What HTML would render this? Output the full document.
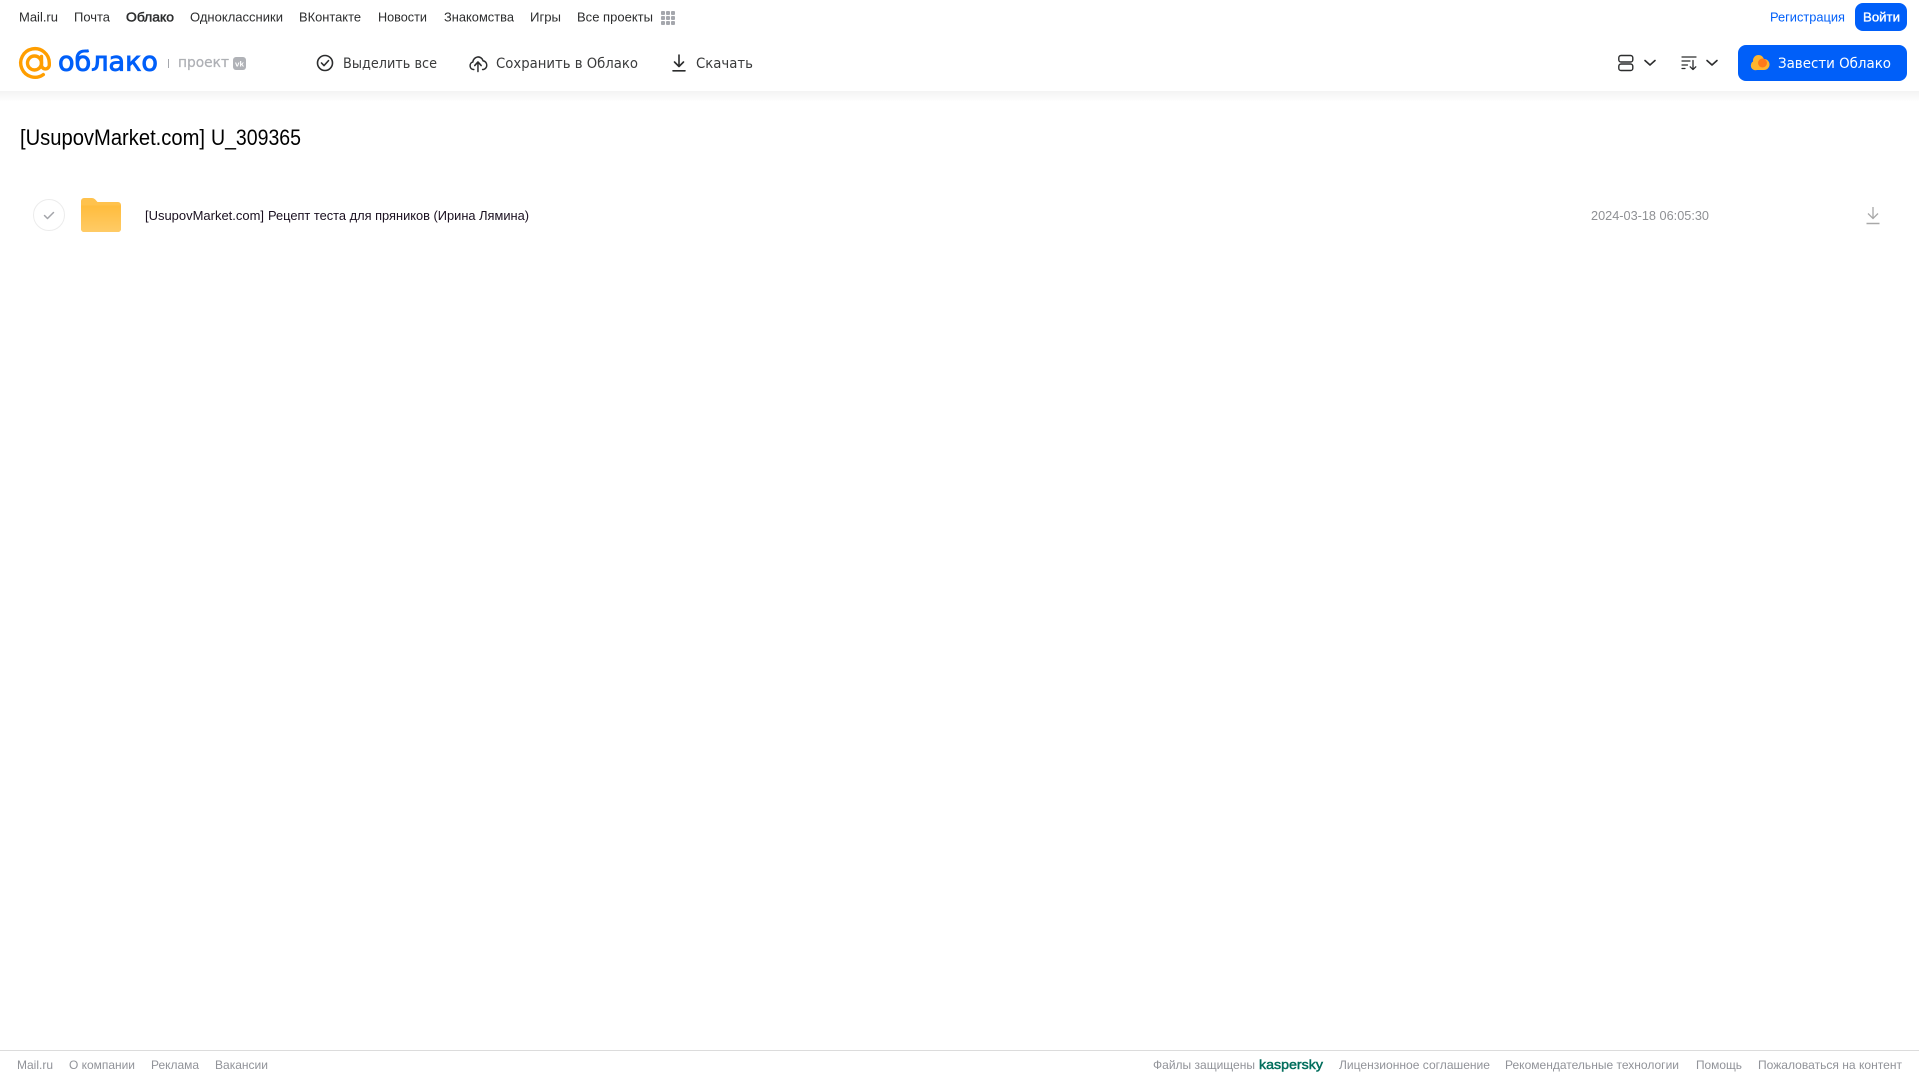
<!DOCTYPE html>
<html lang="ru">
<head>
<meta charset="utf-8">
<title>Облако</title>
<style>
html,body{margin:0;padding:0;background:#fff;width:1919px;height:1079px;overflow:hidden}
svg{display:block;position:absolute;left:0;top:0}
text{font-family:"Liberation Sans",sans-serif;white-space:pre}
.n{font-size:13px;fill:#2c2d2e}
.t{font-family:"DejaVu Sans",sans-serif;font-size:14px;fill:#3a3b3c}
.f{font-size:12px;fill:#919399}
</style>
</head>
<body>
<svg width="1919" height="1079" viewBox="0 0 1919 1079" xmlns="http://www.w3.org/2000/svg">
<defs>
<linearGradient id="sh" x1="0" y1="0" x2="0" y2="1"><stop offset="0" stop-color="#f3f3f3"/><stop offset="1" stop-color="#fff"/></linearGradient>
<linearGradient id="fo" x1="0" y1="0" x2="0" y2="1"><stop offset="0" stop-color="#ffbc3d"/><stop offset="1" stop-color="#ffcb66"/></linearGradient>
</defs>
<rect x="0" y="91" width="1919" height="11" fill="url(#sh)"/>

<!-- top nav -->
<text class="n" x="19" y="21.5" textLength="39" lengthAdjust="spacingAndGlyphs">Mail.ru</text>
<text class="n" x="74" y="21.5" textLength="36" lengthAdjust="spacingAndGlyphs">Почта</text>
<text class="n" x="126" y="21.5" textLength="48" lengthAdjust="spacingAndGlyphs" stroke="#2c2d2e" stroke-width=".45">Облако</text>
<text class="n" x="190" y="21.5" textLength="93" lengthAdjust="spacingAndGlyphs">Одноклассники</text>
<text class="n" x="299" y="21.5" textLength="62" lengthAdjust="spacingAndGlyphs">ВКонтакте</text>
<text class="n" x="378" y="21.5" textLength="49" lengthAdjust="spacingAndGlyphs">Новости</text>
<text class="n" x="444" y="21.5" textLength="70" lengthAdjust="spacingAndGlyphs">Знакомства</text>
<text class="n" x="530" y="21.5" textLength="31" lengthAdjust="spacingAndGlyphs">Игры</text>
<text class="n" x="577" y="21.5" textLength="76" lengthAdjust="spacingAndGlyphs">Все проекты</text>
<g fill="#a5a7ad">
<rect x="661" y="11" width="4" height="4" rx="1"/><rect x="666" y="11" width="4" height="4" rx="1"/><rect x="671" y="11" width="4" height="4" rx="1"/>
<rect x="661" y="16" width="4" height="4" rx="1"/><rect x="666" y="16" width="4" height="4" rx="1"/><rect x="671" y="16" width="4" height="4" rx="1"/>
<rect x="661" y="21" width="4" height="4" rx="1"/><rect x="666" y="21" width="4" height="4" rx="1"/><rect x="671" y="21" width="4" height="4" rx="1"/>
</g>
<text class="n" x="1770" y="21.5" textLength="75" lengthAdjust="spacingAndGlyphs" style="fill:#005ff9">Регистрация</text>
<rect x="1855" y="3" width="52" height="28" rx="8" fill="#005ff9"/>
<text class="n" x="1863" y="21.5" textLength="37" lengthAdjust="spacingAndGlyphs" stroke="#fff" stroke-width=".35" style="fill:#fff">Войти</text>

<!-- logo -->
<path d="M41.500 56.500v8.500a3.900 3.900 0 0 0 7.800 0v-2a14.300 14.300 0 1 0-6 11.600" fill="none" stroke="#ff9e00" stroke-width="3.400" stroke-linecap="round"/>
<circle cx="34.500" cy="63" r="7" fill="none" stroke="#ff9e00" stroke-width="3.400"/>
<text x="58" y="70.500" font-size="27" textLength="100" lengthAdjust="spacingAndGlyphs" fill="#005ff9" stroke="#005ff9" stroke-width=".9" style="font-family:'DejaVu Sans',sans-serif">облако</text>
<rect x="168" y="59" width="1" height="9" fill="#a5a7ad"/>
<text x="178" y="67" font-size="14" textLength="51" lengthAdjust="spacingAndGlyphs" fill="#aeb0b5" stroke="#aeb0b5" stroke-width=".25" style="font-family:'DejaVu Sans',sans-serif">проект</text>
<rect x="233" y="57" width="13" height="13" rx="3" fill="#b0b2b7"/>
<text x="235" y="66.500" font-size="7.500" font-weight="700" textLength="9" lengthAdjust="spacingAndGlyphs" fill="#fff">vk</text>

<!-- toolbar -->
<circle cx="325" cy="63" r="7.500" fill="none" stroke="#2c2d2e" stroke-width="1.600"/>
<path d="M321.500 63l2.500 2.600 4.500-5" fill="none" stroke="#2c2d2e" stroke-width="1.600" stroke-linecap="round" stroke-linejoin="round"/>
<text class="t" x="343" y="68" textLength="94" lengthAdjust="spacingAndGlyphs">Выделить все</text>
<g transform="translate(38.200 0) scale(.92 1)">
<path d="M473.500 69.500h-.5a3.800 3.800 0 0 1-.6-7.500 5.800 5.800 0 0 1 11.200-1.200 4.400 4.400 0 0 1 .4 8.700h-1" fill="none" stroke="#2c2d2e" stroke-width="1.600" stroke-linecap="round" stroke-linejoin="round"/>
<path d="M478 71.500v-9M474.500 65.500l3.500-3.500 3.500 3.500" fill="none" stroke="#2c2d2e" stroke-width="1.600" stroke-linecap="round" stroke-linejoin="round"/>
</g>
<text class="t" x="496" y="68" textLength="142" lengthAdjust="spacingAndGlyphs">Сохранить в Облако</text>
<path d="M679 55v11.500M674.500 62l4.500 4.500 4.500-4.500M673 70.800h12" fill="none" stroke="#2c2d2e" stroke-width="1.600" stroke-linecap="round" stroke-linejoin="round"/>
<text class="t" x="696" y="68" textLength="57" lengthAdjust="spacingAndGlyphs">Скачать</text>

<!-- view / sort -->
<rect x="1618.800" y="55.500" width="14" height="6.500" rx="2.300" fill="none" stroke="#2c2d2e" stroke-width="1.400"/>
<rect x="1618.800" y="64" width="14" height="6.500" rx="2.300" fill="none" stroke="#2c2d2e" stroke-width="1.400"/>
<path d="M1645 60.500l5 4.500 5-4.500" fill="none" stroke="#2c2d2e" stroke-width="1.600" stroke-linecap="round" stroke-linejoin="round"/>
<path d="M1682 57h14M1682 61h8M1682 65h5.500M1682 68.500h3" fill="none" stroke="#2c2d2e" stroke-width="1.200" stroke-linecap="round"/>
<path d="M1693 60.500v9M1690.200 66.800l2.800 2.800 2.800-2.800" fill="none" stroke="#2c2d2e" stroke-width="1.300" stroke-linecap="round" stroke-linejoin="round"/>
<path d="M1707 60.500l5 4.500 5-4.500" fill="none" stroke="#2c2d2e" stroke-width="1.600" stroke-linecap="round" stroke-linejoin="round"/>

<!-- CTA -->
<rect x="1738" y="45" width="169" height="36" rx="8" fill="#005ff9"/>
<g fill="#ffb52e">
<circle cx="1758.500" cy="60.500" r="5.500"/>
<circle cx="1755.500" cy="65.500" r="4.700"/>
<circle cx="1764" cy="64.500" r="5.500"/>
<rect x="1756" y="62" width="8" height="8"/>
</g>
<circle cx="1762.500" cy="63" r="4.500" fill="#ff7a1a"/>
<text x="1778" y="68" font-size="14" textLength="113" lengthAdjust="spacingAndGlyphs" fill="#fff" style="font-family:'DejaVu Sans',sans-serif">Завести Облако</text>

<!-- title -->
<text x="20" y="145" font-size="22" textLength="185" lengthAdjust="spacingAndGlyphs" fill="#000">[UsupovMarket.com]</text>
<text x="211" y="145" font-size="22" textLength="90" lengthAdjust="spacingAndGlyphs" fill="#000">U_309365</text>

<!-- row -->
<circle cx="49" cy="215" r="15.500" fill="#fff" stroke="#ececec" stroke-width="1"/>
<path d="M44.500 215.500l3 3 6-6" fill="none" stroke="#a3a5aa" stroke-width="1.500" stroke-linecap="round" stroke-linejoin="round"/>
<path d="M81 201a3 3 0 0 1 3-3h8a4 4 0 0 1 3 1.300l2.500 2.700h20.500a3 3 0 0 1 3 3v24a3 3 0 0 1-3 3H84a3 3 0 0 1-3-3z" fill="#ffc24d"/>
<path d="M81 205.500h40V229a3 3 0 0 1-3 3H84a3 3 0 0 1-3-3z" fill="url(#fo)"/>
<text x="145" y="220" font-size="13" textLength="119" lengthAdjust="spacingAndGlyphs" fill="#1a1020">[UsupovMarket.com]</text>
<text x="268" y="220" font-size="13" textLength="261" lengthAdjust="spacingAndGlyphs" fill="#1a1020">Рецепт теста для пряников (Ирина Лямина)</text>
<text x="1591" y="220" font-size="13" textLength="118" lengthAdjust="spacingAndGlyphs" fill="#8e9094">2024-03-18 06:05:30</text>
<path d="M1873 207v11.500M1868 213.500l5 5 5-5" fill="none" stroke="#a8a8a8" stroke-width="1.300"/>
<path d="M1866.500 223.500h13" fill="none" stroke="#a8a8a8" stroke-width="1.500"/>

<!-- footer -->
<rect x="0" y="1050" width="1919" height="1" fill="#dcdcdc"/>
<text class="f" x="17" y="1069" textLength="36" lengthAdjust="spacingAndGlyphs">Mail.ru</text>
<text class="f" x="69" y="1069" textLength="66" lengthAdjust="spacingAndGlyphs">О компании</text>
<text class="f" x="151" y="1069" textLength="48" lengthAdjust="spacingAndGlyphs">Реклама</text>
<text class="f" x="215" y="1069" textLength="53" lengthAdjust="spacingAndGlyphs">Вакансии</text>
<text class="f" x="1153" y="1069" textLength="102" lengthAdjust="spacingAndGlyphs">Файлы защищены</text>
<text x="1259" y="1069" font-size="13" textLength="64" lengthAdjust="spacingAndGlyphs" fill="#006d5c" stroke="#006d5c" stroke-width=".45">kaspersky</text>
<text class="f" x="1339" y="1069" textLength="151" lengthAdjust="spacingAndGlyphs">Лицензионное соглашение</text>
<text class="f" x="1505" y="1069" textLength="174" lengthAdjust="spacingAndGlyphs">Рекомендательные технологии</text>
<text class="f" x="1696" y="1069" textLength="46" lengthAdjust="spacingAndGlyphs">Помощь</text>
<text class="f" x="1758" y="1069" textLength="144" lengthAdjust="spacingAndGlyphs">Пожаловаться на контент</text>
</svg>
</body>
</html>
